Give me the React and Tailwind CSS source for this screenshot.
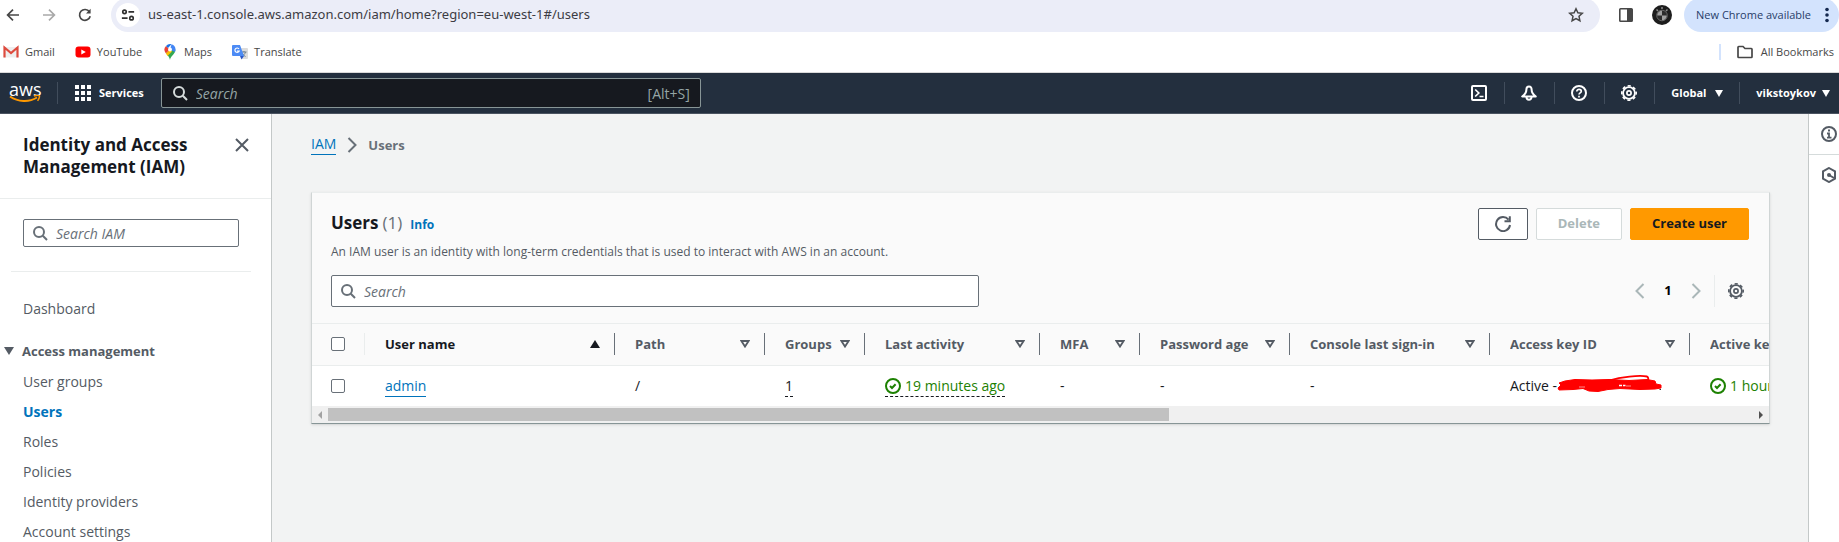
import React from "react";

const Svg = ({ className = "", size = 16, children, ...rest }) => (
  <svg
    width={size}
    height={size}
    viewBox="0 0 16 16"
    fill="none"
    stroke="currentColor"
    strokeWidth="2"
    className={"shrink-0 " + className}
    aria-hidden="true"
    {...rest}
  >
    {children}
  </svg>
);

const SearchIcon = ({ className }) => (
  <Svg className={className}>
    <circle cx="7" cy="7" r="5" />
    <path d="M10.8 10.8 15 15" />
  </Svg>
);

const GearIcon = ({ className }) => (
  <Svg className={className}>
    <circle cx="8" cy="8" r="5.9" strokeWidth="1.8" />
    <circle cx="8" cy="8" r="7.2" strokeWidth="1.6" strokeDasharray="3.2 2.455" strokeDashoffset="1.6" />
    <circle cx="8" cy="8" r="2.1" strokeWidth="1.7" />
  </Svg>
);

const CheckCircle = () => (
  <Svg>
    <circle cx="8" cy="8" r="7" />
    <path d="M5 8l2 2 3.6-3.8" />
  </Svg>
);

const Caret = ({ className = "" }) => (
  <svg width="8" height="7" viewBox="0 0 8 7" className={"shrink-0 " + className} aria-hidden="true">
    <path d="M0 0h8L4 7z" fill="currentColor" />
  </svg>
);

function BrowserBar() {
  return (
    <div className="flex h-9 shrink-0 items-start overflow-hidden bg-white">
      <div className="flex h-[30px] w-[111px] shrink-0 items-center gap-5 pl-[5px] text-[#474747]">
        <button aria-label="Back">
          <Svg strokeWidth="1.7"><path d="M14 8H3M8 2.6 2.6 8 8 13.4" /></Svg>
        </button>
        <button aria-label="Forward" className="text-[#a9a9a9]">
          <Svg strokeWidth="1.7"><path d="M2 8h11M8 2.6 13.4 8 8 13.4" /></Svg>
        </button>
        <button aria-label="Reload">
          <Svg strokeWidth="1.7">
            <path d="M13.2 9.2A5.4 5.4 0 1 1 12.4 4.8" />
            <path d="M13.6 1.8v4.6H9z" fill="currentColor" stroke="none" />
          </Svg>
        </button>
      </div>
      <div className="-mt-0.5 flex h-[34px] grow items-center rounded-full bg-[#ebedf8] pr-4 pl-[5px]">
        <button aria-label="Site information" className="flex size-6 shrink-0 items-center justify-center rounded-full bg-white text-[#303030]">
          <Svg size={14} strokeWidth="1.9">
            <circle cx="4" cy="4.4" r="2" />
            <path d="M8.5 4.4H15M1 11.6h6.5" />
            <circle cx="12" cy="11.6" r="2" />
          </Svg>
        </button>
        <input
          aria-label="Address"
          defaultValue="us-east-1.console.aws.amazon.com/iam/home?region=eu-west-1#/users"
          className="mx-2 min-w-0 grow bg-transparent font-['Noto_Sans',sans-serif] text-[13px] text-[#3c3c44] outline-none"
        />
        <button aria-label="Bookmark this tab" className="text-[#474747]">
          <Svg strokeWidth="1.5"><path d="M8 1.8l1.900 4 4.400.5-3.300 3 .9 4.400L8 11.500l-3.900 2.200.9-4.400-3.300-3 4.400-.5z" /></Svg>
        </button>
      </div>
      <div className="flex h-[30px] shrink-0 items-center pl-[18px]">
        <button aria-label="Side panel" className="text-[#474747]">
          <Svg>
            <rect x="1.8" y="1.8" width="12.4" height="12.4" rx="0.8" strokeWidth="1.6" />
            <path d="M9 2h5v12H9z" fill="currentColor" stroke="none" />
          </Svg>
        </button>
        <button aria-label="Profile" className="ml-[18px]">
          <svg width="20" height="20" viewBox="0 0 20 20" aria-hidden="true">
            <circle cx="10" cy="10" r="10" fill="#1d1d1d" />
            <path d="M4.5 4.5l1.5 1.5M9 3h2M15.5 4.5 14 6" stroke="#8d8d8d" strokeWidth="1.5" />
            <circle cx="10" cy="10.5" r="5.3" fill="#2c2c2c" stroke="#666" />
            <path d="M10 10.5V5.700a4.800 4.800 0 0 0-4.800 4.800zM10 10.500v4.800a4.800 4.800 0 0 0 4.800-4.800z" fill="#a0a0a0" />
          </svg>
        </button>
      </div>
      <button className="-mt-0.5 ml-3 flex h-[34px] shrink-0 items-center gap-2 rounded-full bg-[#d3e3fd] pr-1 pl-3 text-[11px] text-[#283d69]">
        New Chrome available
        <svg width="16" height="16" viewBox="0 0 16 16" fill="#14284f" aria-hidden="true">
          <circle cx="8" cy="2.5" r="1.8" />
          <circle cx="8" cy="8" r="1.8" />
          <circle cx="8" cy="13.5" r="1.8" />
        </svg>
      </button>
    </div>
  );
}

function Bookmarks() {
  return (
    <div className="flex h-[37px] shrink-0 items-center border-b border-[#dadada] bg-white pr-[5px] pb-1 pl-[3px] text-[11px] text-[#474747]">
      <nav aria-label="Bookmarks" className="flex items-center gap-5">
        <a href="#gmail" className="flex items-center gap-1.5">
          <svg width="16" height="16" viewBox="0 0 16 16" aria-hidden="true">
            <path d="M1 3h14v10.500H1z" fill="#eeeeee" />
            <path d="M1.500 13.500V3.500L8 9l6.500-5.500v10" fill="none" stroke="#dd4b3e" strokeWidth="2.2" />
          </svg>
          Gmail
        </a>
        <a href="#youtube" className="flex items-center gap-1.5">
          <svg width="16" height="16" viewBox="0 0 16 16" aria-hidden="true">
            <rect x="0.5" y="2.5" width="15" height="11" rx="3" fill="#f00" />
            <path d="M6.300 5.500v5L10.800 8z" fill="#fff" />
          </svg>
          YouTube
        </a>
        <a href="#maps" className="flex items-center gap-1.5">
          <svg width="16" height="16" viewBox="0 0 16 16" aria-hidden="true">
            <path d="M8 16c.5-4 5.500-6 5.500-10.500H8L4 9c1.500 2 3.500 4 4 7z" fill="#34a853" />
            <path d="M3.800 9.200 8 5.500l2 2-4.500 4.500c-.6-1-1.300-1.900-1.700-2.800z" fill="#fbbc04" />
            <path d="M8 5.500 4 2a5.500 5.500 0 0 0-.2 7.200z" fill="#ea4335" />
            <path d="M4 2a5.500 5.500 0 0 1 5.500-1.800L6 4z" fill="#1a73e8" />
            <path d="M9.500.200A5.500 5.500 0 0 1 13.500 5.500L13 8 8 5.500z" fill="#4285f4" />
            <circle cx="8" cy="5.5" r="2" fill="#fff" />
          </svg>
          Maps
        </a>
        <a href="#translate" className="flex items-center gap-1.5">
          <svg width="16" height="16" viewBox="0 0 16 16" aria-hidden="true">
            <path d="M6 4h9a1 1 0 0 1 1 1v9a1 1 0 0 1-1 1H9z" fill="#dcdcdc" />
            <path d="M9.500 8h5M12 7v1M13.500 8c-.5 2-2 3.500-3.500 4M10.500 9.500c.8 1.500 2 2.500 3 3" fill="none" stroke="#6d7f8c" />
            <path d="M1 1h7l4 11H1a1 1 0 0 1-1-1V2a1 1 0 0 1 1-1z" fill="#4c8bf5" />
            <path d="M8 12h4l-2.500 3.500z" fill="#2a56c6" />
            <path d="M7 5A2.200 2.200 0 1 0 7.200 7H5" fill="none" stroke="#fff" strokeWidth="1.2" />
          </svg>
          Translate
        </a>
      </nav>
      <div className="ml-auto flex items-center">
        <span className="mr-4 h-4 w-0.5 bg-[#d3e3fd]" />
        <button className="flex items-center gap-2">
          <Svg strokeWidth="1.7"><path d="M1 3.200c0-.4.300-.7.700-.7H6l2 2h6.300c.4 0 .7.300.7.700v7.600c0 .4-.3.700-.7.700H1.700a.7.700 0 0 1-.7-.7z" /></Svg>
          All Bookmarks
        </button>
      </div>
    </div>
  );
}

const Rule = () => <span className="h-[22px] w-px shrink-0 bg-[#414d5c]" />;

const IconButton = ({ label, children }) => (
  <button aria-label={label} className="w-[17px]">{children}</button>
);

function ConsoleNav() {
  return (
    <header className="flex h-[41px] shrink-0 items-center border-b border-[#4a5360] bg-[#232f3e] text-[11px] font-bold text-white">
      <a href="#home" aria-label="AWS home" className="flex w-[57px] shrink-0 flex-col items-start pl-[9px]">
        <span className="text-[18px] leading-[12px] font-medium">aws</span>
        <svg width="32" height="8" viewBox="0 0 32 8" fill="none" stroke="#ff9900" aria-hidden="true">
          <path d="M1 1.500c8 5.500 19 6 27 1" strokeWidth="2" />
          <path d="M25 1c2-.7 4.800-.9 5.300-.2s-.3 3.400-1.800 5" strokeWidth="1.5" />
        </svg>
      </a>
      <Rule />
      <button className="ml-[17px] flex items-center gap-2">
        <svg width="16" height="16" viewBox="0 0 16 16" fill="currentColor" aria-hidden="true">
          {[0, 6, 12].map((y) => [0, 6, 12].map((x) => <rect key={x + "-" + y} x={x} y={y} width="4" height="4" />))}
        </svg>
        Services
      </button>
      <label className="ml-[17px] flex h-[30px] w-[540px] items-center gap-2 rounded-xs border border-[#879596] bg-[#16191f] px-2.5 font-normal text-[#d5dbdb]">
        <SearchIcon />
        <input
          aria-label="Search"
          placeholder="Search"
          className="min-w-0 grow bg-transparent text-[14px] outline-none placeholder:text-[#95a5a6] placeholder:italic"
        />
        <span className="text-[14px] text-[#95a5a6]">[Alt+S]</span>
      </label>
      <div className="ml-auto flex items-center gap-4 pr-[9px]">
        <IconButton label="CloudShell">
          <Svg><rect x="1" y="1" width="14" height="14" rx="1" /><path d="M4.200 4.500 7.800 8l-3.600 3.500M8.500 11.500h4" strokeWidth="1.7" /></Svg>
        </IconButton>
        <Rule />
        <IconButton label="Notifications">
          <Svg>
            <path d="M8 1.500c-1.800 0-2.600 1.200-2.600 3C5.400 7.500 4 9.500 1.200 11.500h13.600C12 9.500 10.600 7.500 10.600 4.500c0-1.800-.8-3-2.600-3z" strokeLinejoin="round" />
            <path d="M5.500 12a2.500 2.800 0 0 0 5 0" />
          </Svg>
        </IconButton>
        <Rule />
        <IconButton label="Help">
          <Svg>
            <circle cx="8" cy="8" r="7" />
            <path d="M5.800 6.500c0-3 4.500-2.700 4.500-.2C10.300 8 8 7.800 8 9.600M8 10.800v1.800" strokeWidth="1.7" />
          </Svg>
        </IconButton>
        <Rule />
        <IconButton label="Settings"><GearIcon /></IconButton>
        <Rule />
        <button className="flex w-[52px] items-center justify-between">Global <Caret /></button>
        <Rule />
        <button className="flex items-center gap-1.5">vikstoykov <Caret /></button>
      </div>
    </header>
  );
}

const LINKS = ["User groups", "Users", "Roles", "Policies", "Identity providers", "Account settings"];

function Sidebar() {
  return (
    <aside className="flex w-[272px] shrink-0 flex-col border-r border-[#c4c8c8] bg-white text-[14px] text-[#545b64]">
      <div className="flex items-start justify-between border-b border-[#eaeded] pt-5 pr-[21px] pb-5 pl-[23px]">
        <h2 className="text-[17px] leading-[22px] font-bold text-[#16191f]">Identity and Access<br />Management (IAM)</h2>
        <button aria-label="Close navigation" className="mt-[3px] text-[#545b64]">
          <Svg><path d="M2 2l12 12M14 2 2 14" /></Svg>
        </button>
      </div>
      <label className="mt-5 mr-8 ml-[23px] flex h-8 items-center gap-2 rounded-xs border border-[#687078] px-2 text-[#687078]">
        <SearchIcon />
        <input aria-label="Search IAM" placeholder="Search IAM" className="min-w-0 grow bg-transparent outline-none placeholder:text-[#687078] placeholder:italic" />
      </label>
      <hr className="mt-6 mr-5 ml-[11px] border-[#eaeded]" />
      <nav aria-label="IAM" className="mt-[27px] flex flex-col leading-5">
        <a href="#dashboard" className="pl-[23px]">Dashboard</a>
        <button className="mt-[22px] flex items-center gap-2 pl-1 text-[13px] font-bold">
          <svg width="10" height="8" viewBox="0 0 10 8" aria-hidden="true"><path d="M0 0h10L5 8z" fill="currentColor" /></svg>
          Access management
        </button>
        <ul className="mt-[11px] flex flex-col gap-2.5 pl-[23px]">
          {LINKS.map((l) => (
            <li key={l}>
              <a href="#nav" className={l === "Users" ? "font-bold text-[#0073bb]" : ""}>{l}</a>
            </li>
          ))}
        </ul>
      </nav>
    </aside>
  );
}

const COLUMNS = ["Path", "Groups", "Last activity", "MFA", "Password age", "Console last sign-in", "Access key ID", "Active key age"];

const HeadCell = ({ name, sorted }) => (
  <th className="h-[41px] p-0 text-left" aria-sort={sorted ? "ascending" : undefined}>
    <div className={"flex h-[22px] items-center gap-1.5 border-r border-[#687078] pr-[14px] pl-5 " + (sorted ? "text-[#16191f]" : "")}>
      <span className="grow overflow-hidden whitespace-nowrap">{name}</span>
      <svg width="10" height="8" viewBox="0 0 10 8" fill="none" stroke="currentColor" strokeWidth="1.8" className="shrink-0" aria-hidden="true">
        {sorted ? <path d="M0 8h10L5 0z" fill="currentColor" stroke="none" /> : <path d="M1.400 1h7.200L5 6.600z" />}
      </svg>
    </div>
  </th>
);

function Scribble() {
  return (
    <svg width="105" height="20" viewBox="0 0 105 20" className="-mt-1 shrink-0" aria-hidden="true">
      <path d="M2 9 8 7l10-1.500 17 .5L52 5.500l20 1 18-1 8 1.500 1 3 5 1v3l-6 1-15 .5-20-1-12 1-10 2-9-.5-6-2.500-10 1-14 .5-1-2 3-3z" fill="#f00" stroke="#f00" strokeLinejoin="round" />
      <path d="M52 6.500C64 3 82 1 90 2.500c2 1 1.500 3 1 5" fill="none" stroke="#f00" strokeWidth="1.8" />
      <path d="M62 11.500h3M66 11.500h2.500" stroke="#fff" strokeWidth="1.6" />
      <path d="M69 12h5M22 13h6" stroke="#ff8a8a" strokeWidth="1" />
      <path d="M102.500 15.500h1.500" stroke="#333" strokeWidth="1.2" />
    </svg>
  );
}

function UsersPanel() {
  return (
    <section className="mt-[37px] flex flex-col border border-t-[#eaeded] border-r-[#d0d5d5] border-b-[#879596] border-l-[#d0d5d5] bg-[#fafafa] shadow-sm">
      <div className="flex items-start justify-between pt-[15px] pr-5 pl-[19px]">
        <div>
          <h1 className="flex items-baseline text-[17px] leading-[30px] font-bold text-[#16191f]">
            Users <span className="ml-1 font-normal text-[#687078]">(1)</span>
            <a href="#info" className="ml-2 text-[12px] text-[#0073bb]">Info</a>
          </h1>
          <p className="mt-[3px] text-[12px] leading-[18px] text-[#545b64]">
            An IAM user is an identity with long-term credentials that is used to interact with AWS in an account.
          </p>
        </div>
        <div className="flex gap-2 text-[13px] font-bold">
          <button aria-label="Refresh" className="flex h-8 w-[50px] items-center justify-center rounded-xs border border-[#545b64] bg-white text-[#545b64]">
            <Svg><path d="M15 9a7 7 0 1 1-1.500-5.300M14.800.3v5H9.500" /></Svg>
          </button>
          <button disabled className="h-8 rounded-xs border border-[#d5dbdb] bg-white px-[21px] text-[#aab7b8]">Delete</button>
          <button className="h-8 rounded-xs border border-[#ff9900] bg-[#ff9900] px-[21px] text-[#16191f]">Create user</button>
        </div>
      </div>
      <div className="mt-[14px] flex items-center justify-between pr-5 pb-4 pl-[19px]">
        <label className="flex h-8 w-[648px] items-center gap-2 rounded-xs border border-[#687078] bg-white px-2 text-[#687078]">
          <SearchIcon />
          <input aria-label="Search users" placeholder="Search" className="min-w-0 grow bg-transparent text-[14px] outline-none placeholder:text-[#687078] placeholder:italic" />
        </label>
        <div className="flex items-center text-[13px] font-bold">
          <button aria-label="Previous page" disabled className="text-[#aab7b8]"><Svg><path d="M11.500 1 4.500 8l7 7" /></Svg></button>
          <span className="w-10 text-center">1</span>
          <button aria-label="Next page" disabled className="text-[#aab7b8]"><Svg><path d="M4.500 1l7 7-7 7" /></Svg></button>
          <span className="mr-[13px] ml-2.5 h-8 w-px bg-[#eaeded]" />
          <button aria-label="Preferences" className="mr-[5px] text-[#545b64]"><GearIcon /></button>
        </div>
      </div>
      <div className="overflow-hidden border-t border-[#eaeded]">
        <table className="w-[1578px] table-fixed border-collapse text-[14px] text-[#16191f]">
          <colgroup>
            <col className="w-[53px]" />
            <col className="w-[250px]" />
            <col className="w-[150px]" />
            <col className="w-[100px]" />
            <col className="w-[175px]" />
            <col className="w-[100px]" />
            <col className="w-[150px]" />
            <col className="w-[200px]" />
            <col className="w-[200px]" />
            <col className="w-[200px]" />
          </colgroup>
          <thead className="border-b border-[#eaeded] text-[13px] text-[#545b64]">
            <tr>
              <th className="p-0">
                <div className="flex h-[22px] items-center border-r border-[#eaeded] pl-[19px]">
                  <input type="checkbox" aria-label="Select all users" className="size-[14px] appearance-none rounded-xs border border-[#687078] bg-white" />
                </div>
              </th>
              <HeadCell name="User name" sorted />
              {COLUMNS.map((c) => <HeadCell key={c} name={c} />)}
            </tr>
          </thead>
          <tbody className="bg-white">
            <tr className="h-[41px] *:py-0 *:pr-0 *:pl-5 *:whitespace-nowrap *:first:pl-[19px]">
              <td><input type="checkbox" aria-label="Select admin" className="block size-[14px] appearance-none rounded-xs border border-[#687078] bg-white" /></td>
              <td><a href="#admin" className="inline-block border-b border-[#0073bb] leading-5 text-[#0073bb]">admin</a></td>
              <td>/</td>
              <td><span className="inline-block border-b border-dashed border-[#16191f] leading-5">1</span></td>
              <td>
                <span className="inline-flex items-center gap-1 border-b border-dashed border-[#16191f] align-middle leading-5 text-[#1d8102]">
                  <CheckCircle />19 minutes ago
                </span>
              </td>
              <td>-</td>
              <td>-</td>
              <td>-</td>
              <td><span className="flex items-center">Active -<Scribble /></span></td>
              <td><span className="flex items-center gap-1 text-[#1d8102]"><CheckCircle />1 hour ago</span></td>
            </tr>
          </tbody>
        </table>
        <div className="flex h-[17px] items-center bg-[#f0f0f0]">
          <svg width="16" height="8" viewBox="0 0 16 8" aria-hidden="true"><path d="M10 0v8L6 4z" fill="#a3a3a3" /></svg>
          <div className="grow"><div className="h-[13px] w-[59%] bg-[#c1c1c1]" /></div>
          <svg width="16" height="8" viewBox="0 0 16 8" aria-hidden="true"><path d="M6 0v8l4-4z" fill="#505050" /></svg>
        </div>
      </div>
    </section>
  );
}

export default function App() {
  return (
    <div className="flex h-screen flex-col overflow-hidden bg-[#f2f3f3] font-['Open_Sans',sans-serif]">
      <BrowserBar />
      <Bookmarks />
      <ConsoleNav />
      <div className="flex min-h-0 grow">
        <Sidebar />
        <main className="min-w-0 grow pt-5 pr-[38px] pl-[39px]">
          <nav aria-label="Breadcrumb" className="flex items-center gap-2 text-[14px] leading-5">
            <a href="#iam" className="border-b border-[#0073bb] text-[#0073bb]">IAM</a>
            <Svg className="text-[#687078]"><path d="M4.500 1l7 7-7 7" /></Svg>
            <span className="text-[13px] font-bold text-[#687078]">Users</span>
          </nav>
          <UsersPanel />
        </main>
        <aside aria-label="Help panel" className="w-[31px] shrink-0 border-l border-[#c4c8c8] bg-white text-[#545b64]">
          <button aria-label="Info" className="flex h-[41px] w-full items-center justify-end border-b border-[#d5dbdb] pr-0.5">
            <Svg><circle cx="8" cy="8" r="7" /><path d="M6 7.500h2V12M6 11.700h4.500M7 4.500h2" strokeWidth="1.8" /></Svg>
          </button>
          <button aria-label="Shortcuts" className="flex h-10 w-full items-center justify-end pr-0.5">
            <Svg><path d="M8 1l6 3.400v7.200L8 15l-6-3.400V4.400z" /><circle cx="8" cy="8" r="2" fill="currentColor" stroke="none" /><path d="M8 8l5 3" /></Svg>
          </button>
        </aside>
      </div>
    </div>
  );
}
